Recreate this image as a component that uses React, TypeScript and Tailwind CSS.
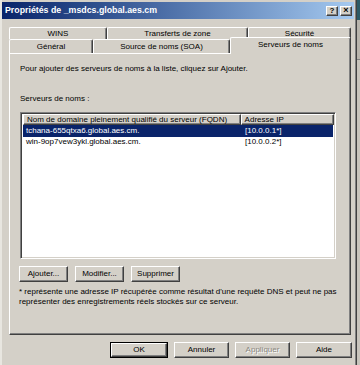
const raised =
  "border border-t-white border-l-white border-r-[#404040] border-b-[#404040] shadow-[inset_-1px_-1px_#808080]";

const Btn = ({
  label,
  width,
  height = "h-[16px]",
  disabled,
}: {
  label: string;
  width: string;
  height?: string;
  disabled?: boolean;
}) => {
  return (
    <div
      className={`${raised} ${width} ${height} bg-[#d4d0c8] flex items-center justify-center text-[8px] leading-none ${
        disabled ? "text-[#8a8780] [text-shadow:1px_1px_0_#fff]" : "text-black"
      }`}
    >
      {label}
    </div>
  );
};

const Tab = ({
  label,
  width,
  height,
  selected,
}: {
  label: string;
  width: string;
  height: string;
  selected?: boolean;
}) => {
  return (
    <div
      className={`${width} ${height} flex items-center justify-center rounded-t-[2px] border-t border-l border-r border-t-white border-l-white border-r-[#404040] shadow-[inset_-1px_0_#808080] text-[8px] leading-none ${
        selected ? "-mb-[1px] relative z-10 bg-[#d4d0c8] pb-[3px]" : ""
      }`}
    >
      {label}
    </div>
  );
};

const rows = [
  { name: "tchana-655qtxa6.global.aes.cm.", ip: "[10.0.0.1*]", selected: true },
  { name: "win-9op7vew3ykl.global.aes.cm.", ip: "[10.0.0.2*]", selected: false },
];

const App = () => {
  return (
    <div className="w-[360px] h-[365px] flex overflow-hidden bg-[#d4d0c8] text-black font-['Liberation_Sans',Arial,sans-serif]">
      <div className="w-[357px] h-full flex flex-col border-l-[2px] border-l-[#e8e6e0] border-r border-r-[#404040] shadow-[inset_-1px_0_#808080]">
        {/* title bar */}
        <div className="mt-[2px] mr-[2px] h-[17px] flex items-center justify-between pl-[3px] pr-[2px] bg-gradient-to-r from-[#0a246a] to-[#a6caf0]">
          <span className="text-white font-bold text-[8.8px] leading-none">
            Propriétés de _msdcs.global.aes.cm
          </span>
          <div className="flex gap-[2px]">
            <div className={`${raised} w-[12px] h-[10px] bg-[#d4d0c8] flex items-center justify-center text-[8px] font-bold leading-none`}>
              ?
            </div>
            <div className={`${raised} w-[12px] h-[10px] bg-[#d4d0c8] flex items-center justify-center text-[9px] font-bold leading-none`}>
              ×
            </div>
          </div>
        </div>

        {/* tabs */}
        <div className="pl-[7px] pt-[8px] flex flex-col">
          <div className="flex">
            <Tab label="WINS" width="w-[98px]" height="h-[12px]" />
            <Tab label="Transferts de zone" width="w-[141px]" height="h-[12px]" />
            <Tab label="Sécurité" width="w-[103px]" height="h-[12px]" />
          </div>
          <div className="flex items-end h-[14px]">
            <Tab label="Général" width="w-[84px]" height="h-[14px]" />
            <Tab label="Source de noms (SOA)" width="w-[137px]" height="h-[14px]" />
            <Tab label="Serveurs de noms" width="w-[121px]" height="h-[17px]" selected />
          </div>
        </div>

        {/* panel */}
        <div className="ml-[7px] w-[342px] h-[282px] flex flex-col border border-t-white border-l-white border-r-[#404040] border-b-[#404040] shadow-[inset_-1px_-1px_#808080] pl-[10px] text-[8px] leading-[10px]">
          <p className="mt-[10px]">
            Pour ajouter des serveurs de noms à la liste, cliquez sur Ajouter.
          </p>
          <p className="mt-[20px]">Serveurs de noms :</p>

          <div className="mt-[8px] w-[316px] h-[147px] bg-white border border-t-[#808080] border-l-[#808080] border-r-white border-b-white shadow-[inset_1px_1px_#404040,inset_-1px_-1px_#d4d0c8] p-[1px] flex flex-col">
            <div className="flex h-[11px] ml-[1px]">
              <div className={`${raised} w-[219px] bg-[#d4d0c8] flex items-center pl-[3px]`}>
                Nom de domaine pleinement qualifié du serveur (FQDN)
              </div>
              <div className={`${raised} w-[94px] bg-[#d4d0c8] flex items-center pl-[3px]`}>
                Adresse IP
              </div>
            </div>
            {rows.map((r) => (
              <div
                key={r.name}
                className={`flex h-[11.5px] items-center ml-[1px] mr-[1px] ${
                  r.selected ? "bg-[#0a246a] text-white" : ""
                }`}
              >
                <span className="w-[219px] pl-[3px]">{r.name}</span>
                <span className="pl-[3px]">{r.ip}</span>
              </div>
            ))}
          </div>

          <div className="mt-[7px] flex gap-[7px] -ml-[1px]">
            <Btn label="Ajouter..." width="w-[49px]" />
            <Btn label="Modifier..." width="w-[49px]" />
            <Btn label="Supprimer" width="w-[49px]" />
          </div>

          <p className="mt-[5px] -ml-[1px] leading-[10px]">
            * représente une adresse IP récupérée comme résultat d&apos;une requête DNS et peut ne pas
            <br />
            représenter des enregistrements réels stockés sur ce serveur.
          </p>
        </div>

        {/* dialog buttons */}
        <div className="mt-[7px] flex justify-end gap-[6px] pr-[4px]">
          <div className="border border-black">
            <Btn label="OK" width="w-[56px]" height="h-[14px]" />
          </div>
          <Btn label="Annuler" width="w-[55px]" />
          <Btn label="Appliquer" width="w-[55px]" disabled />
          <Btn label="Aide" width="w-[56px]" />
        </div>
      </div>

      {/* window behind */}
      <div className="flex-1 flex flex-col">
        <div className="h-[20px] bg-[#2b5a66]" />
        <div className="h-[40px] bg-[#b8b4ac] border-b border-b-[#808080]" />
        <div className="flex-1 bg-[#c8c4bc]" />
      </div>
    </div>
  );
};

export default App;
